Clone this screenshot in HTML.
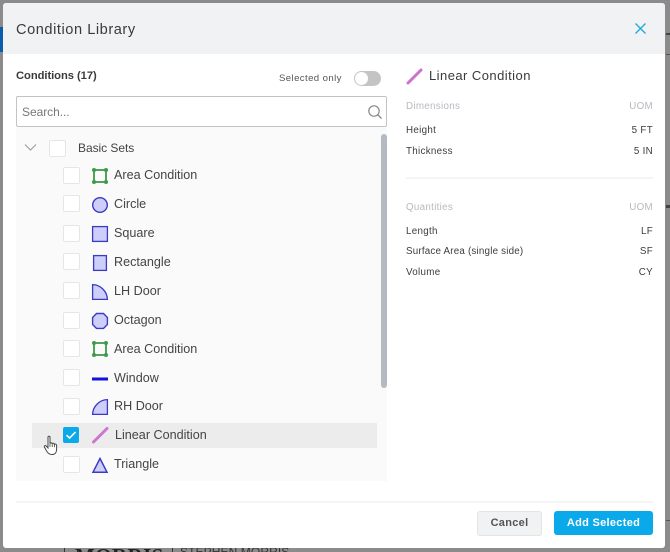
<!DOCTYPE html>
<html style="width:670px;height:552px;overflow:hidden"><head><meta charset="utf-8">
<style>
html,body{margin:0;padding:0}
body{width:670px;height:552px;overflow:hidden;position:relative;background:#8b8b8b;font-family:"Liberation Sans",sans-serif;}
#w{position:absolute;left:0;top:0;width:670px;height:552px;overflow:hidden;filter:blur(.35px)}
.a{position:absolute;white-space:nowrap}
.cb{position:absolute;left:63px;width:15px;height:15px;background:#fff;border:1px solid #e6e6e6;border-radius:2px}
.l{position:absolute;left:114px;font-size:12.6px;color:#444;white-space:nowrap;letter-spacing:0;line-height:16px}
.ic{position:absolute;left:91px;width:18px;height:18px}
.r{font-size:9.8px;color:#3d3d3d;letter-spacing:.3px;line-height:12px}
.g{font-size:9.8px;color:#b5bac0;letter-spacing:.3px;line-height:12px}
</style></head><body>
<div id="w">
<div class="a" style="left:0;top:27px;width:3px;height:25px;background:#0b5cab"></div>
<div class="a" style="left:75px;top:545px;font:bold 21px/22px 'Liberation Serif',serif;color:#222;letter-spacing:.4px">MORRIS</div>
<div class="a" style="left:64px;top:548px;width:1px;height:4px;background:#333"></div>
<div class="a" style="left:172px;top:548px;width:1px;height:4px;background:#333"></div>
<div class="a" style="left:180px;top:545px;font-size:12px;color:#333;letter-spacing:.1px;line-height:14px">STEPHEN MORRIS</div>
<div class="a" style="left:666px;top:33px;width:4px;height:2px;background:#444"></div>
<div class="a" style="left:666px;top:54px;width:4px;height:1px;background:#555"></div>
<div class="a" style="left:666px;top:205px;width:4px;height:3px;background:#444"></div>
<div class="a" style="left:666px;top:520px;width:4px;height:1px;background:#555"></div>

<div class="a" style="left:3px;top:3px;width:662px;height:545px;background:#fff;border-radius:3px"></div>
<div class="a" style="left:3px;top:3px;width:662px;height:51px;background:#f1f2f4;border-radius:3px 3px 0 0"></div>
<div class="a" style="left:16px;top:21px;font-size:14.6px;letter-spacing:.55px;color:#3a3a3a;line-height:18px">Condition Library</div>
<svg class="a" style="left:634px;top:22px" width="13" height="13" viewBox="0 0 13 13"><path d="M1.5 1.5L11.5 11.5M11.5 1.5L1.5 11.5" stroke="#22aade" stroke-width="1.4" fill="none"/></svg>

<div class="a" style="left:16px;top:70px;font-size:11.2px;font-weight:bold;color:#3a3a3a;line-height:13px;letter-spacing:-.05px">Conditions (17)</div>
<div class="a" style="left:279px;top:73px;font-size:9.6px;color:#555;letter-spacing:.4px;line-height:12px">Selected only</div>
<div class="a" style="left:354px;top:71px;width:27px;height:15px;border-radius:8px;background:#c4c4c4"></div>
<div class="a" style="left:355px;top:72px;width:13px;height:13px;border-radius:50%;background:#fff"></div>

<div class="a" style="left:16px;top:127px;width:371px;height:354px;background:#fafafa"></div>
<div class="a" style="left:16px;top:96px;width:369px;height:29px;border:1px solid #c3c3c3;border-radius:2px;background:#fff"></div>
<div class="a" style="left:22px;top:104px;font-size:12px;color:#777;letter-spacing:-.05px;line-height:16px">Search...</div>
<svg class="a" style="left:367px;top:104px" width="16" height="16" viewBox="0 0 16 16"><circle cx="7" cy="7" r="5.2" stroke="#888" stroke-width="1.2" fill="none"/><path d="M10.8 10.8L14.5 14.5" stroke="#888" stroke-width="1.3"/></svg>

<div class="a" style="left:381px;top:134px;width:6px;height:254px;background:#b4bac1;border-radius:3px"></div>

<svg class="a" style="left:24px;top:143px" width="13" height="9" viewBox="0 0 13 9"><path d="M1 1.5L6.5 7L12 1.5" stroke="#a0a0a0" stroke-width="1.2" fill="none"/></svg>
<div class="cb" style="left:49px;top:140px"></div>
<div class="l" style="left:78px;top:140px;font-size:12px;letter-spacing:-.05px">Basic Sets</div>

<div class="a" style="left:32px;top:423px;width:345px;height:25px;background:#ececec"></div>

<div class="cb" style="top:167px"></div>
<svg class="ic" style="top:167px" viewBox="0 0 18 18"><rect x="3" y="3" width="12" height="12" fill="none" stroke="#3f9a4a" stroke-width="1.8"/><circle cx="3" cy="3" r="2" fill="#3f9a4a"/><circle cx="15" cy="3" r="2" fill="#3f9a4a"/><circle cx="3" cy="15" r="2" fill="#3f9a4a"/><circle cx="15" cy="15" r="2" fill="#3f9a4a"/></svg>
<div class="l" style="top:167px">Area Condition</div>

<div class="cb" style="top:195px"></div>
<svg class="ic" style="top:196px" viewBox="0 0 18 18"><circle cx="9" cy="9" r="7.3" fill="#cdcffa" stroke="#3a3ac4" stroke-width="1.4"/></svg>
<div class="l" style="top:196px">Circle</div>

<div class="cb" style="top:225px"></div>
<svg class="ic" style="top:225px" viewBox="0 0 18 18"><rect x="1.6" y="1.6" width="14.8" height="14.8" fill="#cdcffa" stroke="#3a3ac4" stroke-width="1.3"/></svg>
<div class="l" style="top:225px">Square</div>

<div class="cb" style="top:253px"></div>
<svg class="ic" style="top:254px" viewBox="0 0 18 18"><rect x="2.6" y="1.6" width="12.8" height="14.8" fill="#cdcffa" stroke="#3a3ac4" stroke-width="1.3"/></svg>
<div class="l" style="top:254px">Rectangle</div>

<div class="cb" style="top:282px"></div>
<svg class="ic" style="top:283px" viewBox="0 0 18 18"><path d="M1.6 1.6C9 1.6 16.2 8 16.4 16.4H1.6Z" fill="#cdcffa" stroke="#3a3ac4" stroke-width="1.3"/></svg>
<div class="l" style="top:283px">LH Door</div>

<div class="cb" style="top:312px"></div>
<svg class="ic" style="top:312px" viewBox="0 0 18 18"><path d="M5.5 1.5H12.5L16.4 5.5V12.5L12.5 16.4H5.5L1.6 12.5V5.5Z" fill="#cdcffa" stroke="#3a3ac4" stroke-width="1.4"/></svg>
<div class="l" style="top:312px">Octagon</div>

<div class="cb" style="top:340px"></div>
<svg class="ic" style="top:340px" viewBox="0 0 18 18"><rect x="3" y="3" width="12" height="12" fill="none" stroke="#3f9a4a" stroke-width="1.8"/><circle cx="3" cy="3" r="2" fill="#3f9a4a"/><circle cx="15" cy="3" r="2" fill="#3f9a4a"/><circle cx="3" cy="15" r="2" fill="#3f9a4a"/><circle cx="15" cy="15" r="2" fill="#3f9a4a"/></svg>
<div class="l" style="top:341px">Area Condition</div>

<div class="cb" style="top:369px"></div>
<svg class="ic" style="top:370px" viewBox="0 0 18 18"><rect x="1" y="7.5" width="16" height="3" fill="#1212d8"/></svg>
<div class="l" style="top:370px">Window</div>

<div class="cb" style="top:398px"></div>
<svg class="ic" style="top:398px" viewBox="0 0 18 18"><path d="M16.4 1.6C9 1.6 1.8 8 1.6 16.4H16.4Z" fill="#cdcffa" stroke="#3a3ac4" stroke-width="1.3"/></svg>
<div class="l" style="top:398px">RH Door</div>

<div class="a" style="left:63px;top:427px;width:16px;height:16px;background:#0aa9ea;border-radius:2px"></div>
<svg class="a" style="left:63px;top:427px" width="16" height="16" viewBox="0 0 16 16"><path d="M3.5 8.2L6.6 11L12.5 5" stroke="#fff" stroke-width="1.6" fill="none"/></svg>
<svg class="ic" style="top:426px" viewBox="0 0 18 18"><path d="M2.5 16L16 2.5" stroke="#cc77cc" stroke-width="3" stroke-linecap="round"/></svg>
<div class="l" style="left:115px;top:427px">Linear Condition</div>

<div class="cb" style="top:456px"></div>
<svg class="ic" style="top:456px" viewBox="0 0 18 18"><path d="M9 2.5L16 16.2H2Z" fill="#cdcffa" stroke="#3a3ac4" stroke-width="1.5"/></svg>
<div class="l" style="top:456px">Triangle</div>

<svg class="a" style="left:43px;top:435px" width="16" height="21" viewBox="0 0 16 21"><path d="M5 2.2C5 1 7 1 7 2.2V8.5C7.2 7.5 9 7.5 9.2 8.8C9.5 7.9 11.2 8 11.4 9.4C11.8 8.7 13.5 8.9 13.6 10.4V14.5C13.6 17.5 12 19.5 9 19.5C6 19.5 4.6 18 3.5 15.8L1.4 12C1 10.8 2.4 10 3.2 11L5 13Z" fill="#fff" stroke="#444" stroke-width="1"/><path d="M7 8.5V12M9.2 8.8V12M11.4 9.4V12.2" stroke="#444" stroke-width=".8"/></svg>

<svg class="a" style="left:406px;top:68px" width="17" height="17" viewBox="0 0 17 17"><path d="M2 15L15 2" stroke="#cf6fd0" stroke-width="3" stroke-linecap="round"/></svg>
<div class="a" style="left:429px;top:68px;font-size:13px;letter-spacing:.45px;color:#3a3a3a;line-height:16px">Linear Condition</div>

<div class="a g" style="left:406px;top:101px">Dimensions</div>
<div class="a g" style="right:17px;top:101px">UOM</div>
<div class="a r" style="left:406px;top:125px">Height</div>
<div class="a r" style="right:17px;top:125px">5 FT</div>
<div class="a r" style="left:406px;top:146px">Thickness</div>
<div class="a r" style="right:17px;top:146px">5 IN</div>
<div class="a" style="left:406px;top:177px;width:247px;height:2px;background:#f4f4f4"></div>
<div class="a g" style="left:406px;top:202px">Quantities</div>
<div class="a g" style="right:17px;top:202px">UOM</div>
<div class="a r" style="left:406px;top:226px">Length</div>
<div class="a r" style="right:17px;top:226px">LF</div>
<div class="a r" style="left:406px;top:246px;letter-spacing:.2px">Surface Area (single side)</div>
<div class="a r" style="right:17px;top:246px">SF</div>
<div class="a r" style="left:406px;top:267px">Volume</div>
<div class="a r" style="right:17px;top:267px">CY</div>

<div class="a" style="left:16px;top:501px;width:637px;height:2px;background:#f4f4f4"></div>
<div class="a" style="left:477px;top:511px;width:63px;height:23px;background:#f1f2f4;border:1px solid #e4e4e4;border-radius:3px;text-align:center;font-size:11px;font-weight:bold;color:#555;line-height:23px;letter-spacing:.3px">Cancel</div>
<div class="a" style="left:554px;top:511px;width:99px;height:24px;background:#0aa9ea;border-radius:3px;text-align:center;font-size:11px;font-weight:bold;color:#fff;line-height:24px;letter-spacing:.3px">Add Selected</div>
</div>
</body></html>
